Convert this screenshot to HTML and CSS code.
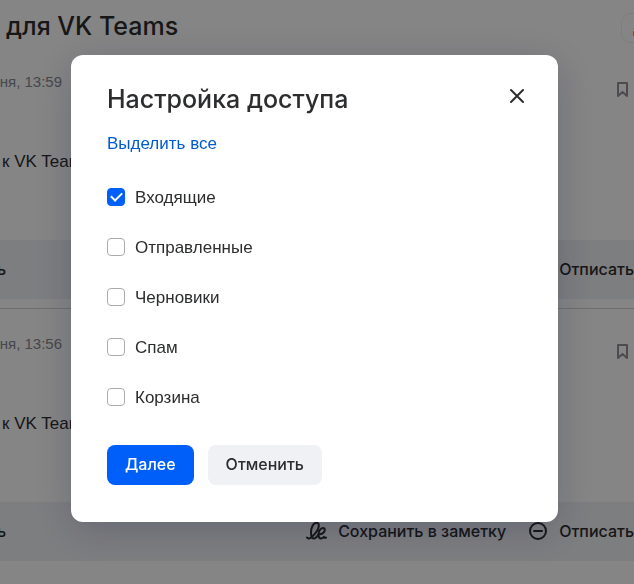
FILE: index.html
```html
<!DOCTYPE html>
<html lang="ru">
<head>
  <meta charset="UTF-8">
  <meta name="viewport" content="width=device-width, initial-scale=1.0">
  <title>Настройка доступа</title>
  <link rel="stylesheet" href="styles.css">
</head>
<body>
  <main class="thread">
    <header class="thread-header">
      <h1 class="thread-title">для VK Teams</h1>
      <div class="category"><span class="category-mark"></span></div>
    </header>

    <article class="letter">
      <div class="letter-head">
        <time class="letter-date">дня, 13:59</time>
        <button class="bookmark" aria-label="Закладка">
          <svg width="12" height="17" viewBox="0 0 12 17"><path d="M2 2h9v13l-4.500-4L2 15z"/></svg>
        </button>
      </div>
      <p class="letter-text">к VK Teams</p>
      <div class="actions">
        <a class="action action-first" href="#">ь</a>
        <a class="action" href="#">Отписать</a>
      </div>
    </article>

    <article class="letter">
      <div class="letter-head">
        <time class="letter-date">дня, 13:56</time>
        <button class="bookmark" aria-label="Закладка">
          <svg width="12" height="17" viewBox="0 0 12 17"><path d="M2 2h9v13l-4.500-4L2 15z"/></svg>
        </button>
      </div>
      <p class="letter-text">к VK Teams</p>
      <div class="actions">
        <a class="action action-first" href="#">ь</a>
        <a class="action" href="#">
          <svg width="21" height="20" viewBox="0 0 21 20"><path d="M1 16.500c1 1.700 3.200 1 5-.7 3.400-3.200 6.800-7.800 6.800-11.300 0-1.700-.8-2.800-2.300-2.800C7.400 1.700 5 6.800 5 11.500c0 3.800.8 6 2.800 6 2.200 0 3.600-2.300 4.700-4.200M12.800 13.200c3 .3 6-1.900 6-4.200 0-1.300-.8-2-1.900-2-2.500 0-4.400 3.400-4.400 6.500 0 2.500.9 4 2.500 4 1.300 0 2.300-.9 3-1.700.4.900 1.100 1.300 2 .8"/></svg>
          Сохранить в заметку
        </a>
        <a class="action" href="#">
          <svg width="20" height="20" viewBox="0 0 20 20"><circle cx="10" cy="10" r="8"/><path d="M6 10h8"/></svg>
          Отписать
        </a>
      </div>
    </article>
  </main>

  <div class="overlay">
    <form class="modal" role="dialog" aria-labelledby="modal-title">
      <div class="modal-header">
        <h2 class="modal-title" id="modal-title">Настройка доступа</h2>
        <button class="close" type="button" aria-label="Закрыть">
          <svg width="16" height="16" viewBox="0 0 16 16"><path d="M2 2l12 12M14 2L2 14"/></svg>
        </button>
      </div>
      <a class="select-all" href="#">Выделить все</a>
      <div class="folders">
        <label class="folder"><input type="checkbox" checked>Входящие</label>
        <label class="folder"><input type="checkbox">Отправленные</label>
        <label class="folder"><input type="checkbox">Черновики</label>
        <label class="folder"><input type="checkbox">Спам</label>
        <label class="folder"><input type="checkbox">Корзина</label>
      </div>
      <div class="buttons">
        <button class="btn btn-primary" type="submit">Далее</button>
        <button class="btn" type="button">Отменить</button>
      </div>
    </form>
  </div>
</body>
</html>
```
FILE: styles.css
```css
* {
  box-sizing: border-box;
}

body {
  margin: 0;
  height: 100vh;
  overflow: hidden;
  font: 17px/24px "Liberation Sans", Arial, sans-serif;
  color: #2c2d2e;
  background: #fff;
}

h1, h2, p {
  margin: 0;
}

button {
  border: none;
  background: none;
  padding: 0;
  color: inherit;
  cursor: pointer;
}

svg {
  display: block;
  flex: none;
  fill: none;
  stroke: currentColor;
  stroke-width: 2;
  stroke-linecap: round;
  stroke-linejoin: round;
}

/* letters under the dialog */
.thread-header {
  display: flex;
  justify-content: space-between;
  height: 46px;
  padding: 10px 0 0 6px;
}

.thread-title {
  font: 500 25px/32px Inter, sans-serif;
}

.category {
  display: flex;
  align-items: flex-end;
  justify-content: flex-end;
  width: 13px;
  height: 30px;
  margin-top: 3px;
  padding-bottom: 6px;
  border: 1px solid #f0f1f5;
  border-right: none;
  border-radius: 10px 0 0 10px;
}

.category-mark {
  width: 1px;
  height: 5px;
  background: #ffa000;
}

.letter {
  padding: 24px 0 9px;
}

.letter + .letter {
  padding-top: 23px;
  border-top: 1px solid #d3d4d8;
}

.letter-head {
  display: flex;
  justify-content: space-between;
  height: 80px;
}

.letter-date {
  display: flex;
  justify-content: flex-end;
  width: 62px;
  white-space: nowrap;
  font-size: 15px;
  color: #87898f;
}

.bookmark {
  align-self: flex-start;
  margin: 11px 6px 0 0;
  color: #919399;
}

.letter-text {
  height: 90px;
  padding-left: 2px;
}

.actions {
  display: flex;
  align-items: center;
  justify-content: flex-end;
  gap: 22px;
  height: 59px;
  padding-bottom: 2px;
  background: #f0f1f5;
}

.action {
  display: flex;
  align-items: center;
  gap: 11px;
  font: 500 16px/24px Inter, sans-serif;
  color: inherit;
  text-decoration: none;
  white-space: nowrap;
}

.action-first {
  justify-content: flex-end;
  width: 6px;
  margin-right: auto;
}

/* dialog */
.overlay {
  position: fixed;
  inset: 0;
  padding: 55px 76px 62px 71px;
  background: rgba(0, 0, 0, 0.48);
}

.modal {
  padding: 24px 33px 37px 36px;
  border-radius: 12px;
  background: #fff;
  box-shadow: 0 8px 40px rgba(0, 16, 61, 0.2);
}

.modal-header {
  display: flex;
  justify-content: space-between;
  margin-bottom: 13px;
}

.modal-title {
  font: 500 25px/40px Inter, sans-serif;
}

.close {
  display: flex;
  align-self: flex-start;
  margin-top: 9px;
}

.select-all {
  display: inline-block;
  color: #005bd1;
  text-decoration: none;
}

.folders {
  display: grid;
  gap: 26px;
  margin-top: 30px;
}

.folder {
  display: flex;
  align-items: center;
  gap: 10px;
}

.folder input {
  appearance: none;
  display: grid;
  place-items: center;
  width: 18px;
  height: 18px;
  margin: 0 0 2px;
  border: 1px solid #aaabad;
  border-radius: 4px;
}

.folder input:checked {
  border-color: #005ff9;
  background: #005ff9;
}

.folder input:checked::before {
  content: "";
  width: 9px;
  height: 5px;
  margin-bottom: 3px;
  border: solid #fff;
  border-width: 0 0 2px 2px;
  transform: rotate(-45deg);
}

.buttons {
  display: flex;
  gap: 14px;
  margin-top: 35px;
}

.btn {
  padding: 7px 18px 9px;
  border-radius: 8px;
  font: 500 16px/24px Inter, sans-serif;
  background: #f0f1f5;
}

.btn-primary {
  color: #fff;
  background: #005ff9;
}
```
